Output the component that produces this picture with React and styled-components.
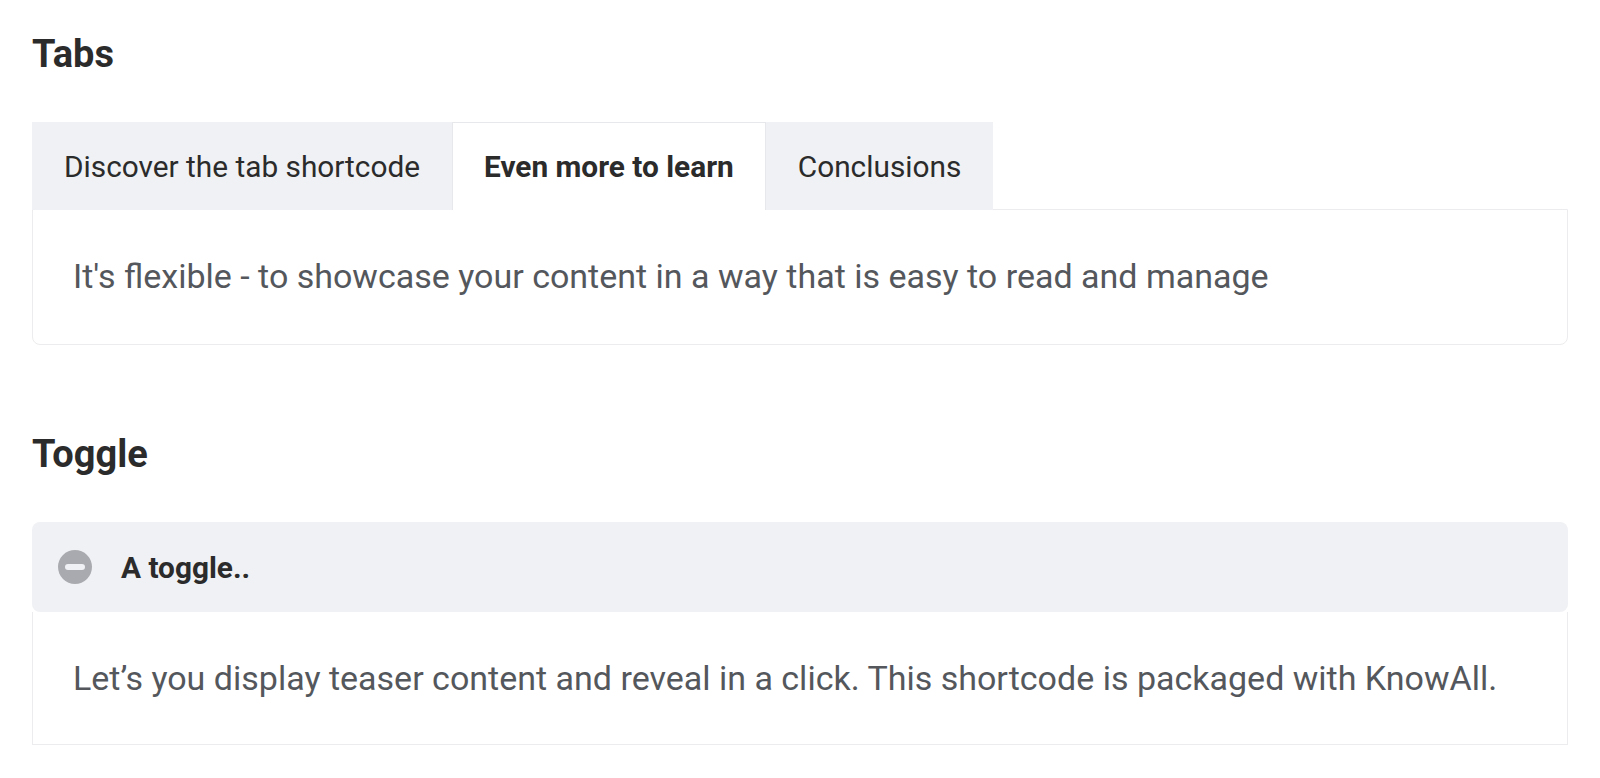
import React, {useState} from 'react';
import styled, {createGlobalStyle} from 'styled-components';

const GlobalStyle = createGlobalStyle`
    body {
        margin: 0;
        background: #fff;
        font-family: Roboto, "Liberation Sans", sans-serif;
        color: #2b2b2b;
    }
`;

const Page = styled.div`
    padding: 28px 32px 0;
`;

const Section = styled.section`
    margin-bottom: 83px;

    &:last-child {
        margin-bottom: 0;
    }
`;

const Title = styled.h2`
    margin: 0 0 ${props => props.gap || 42}px;
    font-size: 38px;
    line-height: 52px;
    font-weight: 700;
    color: #2b2b2b;
`;

const TabBar = styled.div`
    display: flex;
    align-items: stretch;
`;

const Tab = styled.button`
    height: 88px;
    padding: 0 31px;
    border: 1px solid ${props => props.active ? '#e7e8ec' : '#f0f1f4'};
    border-bottom: none;
    background: ${props => props.active ? '#fff' : '#f0f1f4'};
    font-family: inherit;
    font-size: 29.8px;
    font-weight: ${props => props.active ? 700 : 400};
    color: #2b2b2b;
    cursor: pointer;
    margin-bottom: -1px;
    position: relative;
    z-index: 1;
`;

const Panel = styled.div`
    border: 1px solid #ececee;
    border-radius: 0 0 8px 8px;
    padding: 42px 40px 44px;
    font-size: 34px;
    line-height: 48px;
    color: #54575c;
`;

const ToggleHead = styled.div`
    display: flex;
    align-items: center;
    gap: 29px;
    height: 90px;
    padding: 0 26px;
    background: #f0f1f4;
    border-radius: 8px;
    font-size: 29.8px;
    font-weight: 700;
    color: #2b2b2b;
    cursor: pointer;
`;

const ToggleIcon = styled.span`
    width: 34px;
    height: 34px;
    border-radius: 50%;
    background: #a9aaaf;
    display: flex;
    align-items: center;
    justify-content: center;

    &::after {
        content: '';
        width: 20px;
        height: 6px;
        border-radius: 3px;
        background: #f0f1f4;
    }
`;

const ToggleBody = styled.div`
    border: 1px solid #ececee;
    border-top: none;
    padding: 42px 40px 42px;
    font-size: 34px;
    line-height: 48px;
    color: #54575c;
`;

const tabs = [
    {label: 'Discover the tab shortcode', text: 'Discover the tab shortcode and organise content neatly'},
    {label: 'Even more to learn', text: "It's flexible - to showcase your content in a way that is easy to read and manage"},
    {label: 'Conclusions', text: 'Tabs keep long articles short and tidy'},
];

const App = () => {
    const [Active, setActive] = useState(1);
    const [Open, setOpen] = useState(true);

    return (
        <Page>
            <GlobalStyle/>
            <Section>
                <Title>Tabs</Title>
                <TabBar>
                    {tabs.map((t, i) => (
                        <Tab key={t.label} active={i === Active ? 1 : 0} onClick={() => setActive(i)}>
                            {t.label}
                        </Tab>
                    ))}
                </TabBar>
                <Panel>{tabs[Active].text}</Panel>
            </Section>
            <Section>
                <Title gap={42}>Toggle</Title>
                <ToggleHead onClick={() => setOpen(!Open)}>
                    <ToggleIcon/>
                    A toggle..
                </ToggleHead>
                {Open && (
                    <ToggleBody>
                        Let’s you display teaser content and reveal in a click. This shortcode is packaged with KnowAll.
                    </ToggleBody>
                )}
            </Section>
        </Page>
    );
};

export default App;
